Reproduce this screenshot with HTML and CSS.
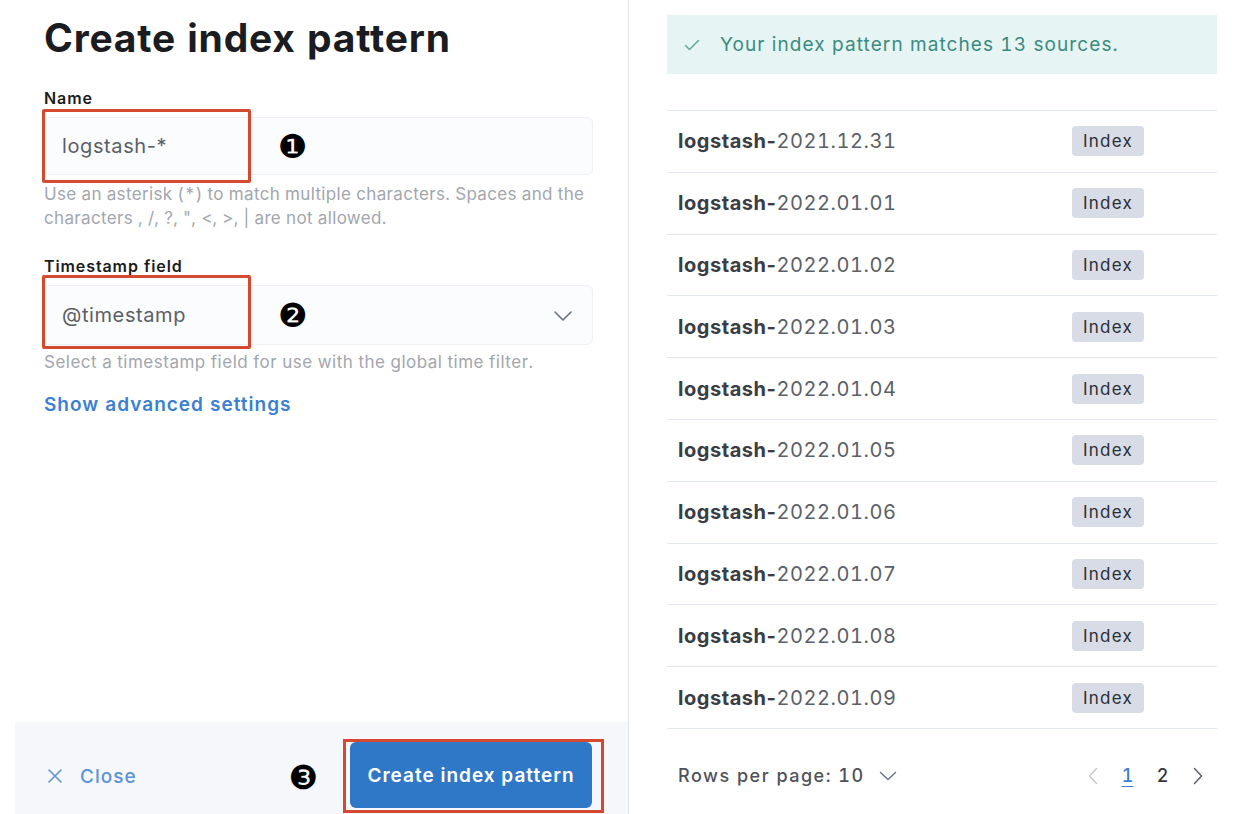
FILE: index.html
```html
<!DOCTYPE html>
<html>
<head>
<meta charset="utf-8">
<link rel="stylesheet" href="styles.css">
</head>
<body>
<div class="page">
  <section class="left">
    <div class="form">
      <h1 class="title">Create index pattern</h1>
      <div class="field">
        <div class="label">Name</div>
        <div class="control input">
          <span class="value">logstash-*</span>
          <span class="marker">❶</span>
          <span class="highlight"></span>
        </div>
        <p class="help">Use an asterisk (*) to match multiple characters. Spaces and the characters , /, ?, ", &lt;, &gt;, | are not allowed.</p>
      </div>
      <div class="field field-ts">
        <div class="label">Timestamp field</div>
        <div class="control select">
          <span class="value">@timestamp</span>
          <span class="marker">❷</span>
          <svg class="chev" width="20" height="12" viewBox="0 0 20 12"><path d="M2 2 L10 10 L18 2" fill="none" stroke="#69707d" stroke-width="1.6" stroke-linecap="round" stroke-linejoin="round"/></svg>
          <span class="highlight hl-ts"></span>
        </div>
        <p class="help help-ts">Select a timestamp field for use with the global time filter.</p>
      </div>
      <a class="advanced">Show advanced settings</a>
    </div>
    <footer class="footer">
      <div class="close">
        <svg width="16" height="16" viewBox="0 0 16 16"><path d="M2 2 L14 14 M14 2 L2 14" stroke="#5e92d8" stroke-width="1.6" stroke-linecap="round"/></svg>
        <span>Close</span>
      </div>
      <div class="actions">
        <span class="marker marker-3">❸</span>
        <div class="btn-wrap">
          <button class="btn">Create index pattern</button>
        </div>
      </div>
    </footer>
  </section>
  <section class="right">
    <div class="callout">
      <svg width="16" height="12" viewBox="0 0 16 12"><path d="M1.5 6.5 L5.5 10.5 L14.5 1.5" fill="none" stroke="#5fa89c" stroke-width="1.5" stroke-linecap="round" stroke-linejoin="round"/></svg>
      <span>Your index pattern matches 13 sources.</span>
    </div>
    <div class="table">
      <div class="row"><span class="name"><b>logstash-</b>2021.12.31</span><span class="badge">Index</span></div>
      <div class="row"><span class="name"><b>logstash-</b>2022.01.01</span><span class="badge">Index</span></div>
      <div class="row"><span class="name"><b>logstash-</b>2022.01.02</span><span class="badge">Index</span></div>
      <div class="row"><span class="name"><b>logstash-</b>2022.01.03</span><span class="badge">Index</span></div>
      <div class="row"><span class="name"><b>logstash-</b>2022.01.04</span><span class="badge">Index</span></div>
      <div class="row"><span class="name"><b>logstash-</b>2022.01.05</span><span class="badge">Index</span></div>
      <div class="row"><span class="name"><b>logstash-</b>2022.01.06</span><span class="badge">Index</span></div>
      <div class="row"><span class="name"><b>logstash-</b>2022.01.07</span><span class="badge">Index</span></div>
      <div class="row"><span class="name"><b>logstash-</b>2022.01.08</span><span class="badge">Index</span></div>
      <div class="row"><span class="name"><b>logstash-</b>2022.01.09</span><span class="badge">Index</span></div>
    </div>
    <div class="pager">
      <div class="rows-per">
        <span>Rows per page: 10</span>
        <svg width="18" height="10" viewBox="0 0 18 10"><path d="M1.5 1.5 L9 8.5 L16.5 1.5" fill="none" stroke="#69707d" stroke-width="1.4" stroke-linecap="round" stroke-linejoin="round"/></svg>
      </div>
      <div class="pages">
        <span class="pg"><svg width="10" height="18" viewBox="0 0 10 18"><path d="M8.5 1.5 L1.5 9 L8.5 16.5" fill="none" stroke="#c2c6cf" stroke-width="1.4" stroke-linecap="round" stroke-linejoin="round"/></svg></span>
        <span class="pg current">1</span>
        <span class="pg">2</span>
        <span class="pg"><svg width="10" height="18" viewBox="0 0 10 18"><path d="M1.5 1.5 L8.5 9 L1.5 16.5" fill="none" stroke="#545a66" stroke-width="1.4" stroke-linecap="round" stroke-linejoin="round"/></svg></span>
      </div>
    </div>
  </section>
</div>
</body>
</html>
```

FILE: styles.css
```css
* { box-sizing: border-box; }
html, body { margin: 0; padding: 0; background: #fff; }
body {
  font-family: Inter, "Noto Sans", "Liberation Sans", sans-serif;
  font-feature-settings: "tnum" 1;
  color: #1a1c21;
  width: 1236px;
  height: 814px;
  overflow: hidden;
}
.page {
  display: flex;
  height: 814px;
}
.left {
  width: 629px;
  border-right: 1px solid #e3e6ec;
  display: flex;
  flex-direction: column;
}
.form {
  flex: 1;
  padding: 15px 35px 0 44px;
}
.title {
  margin: 0;
  font-size: 39px;
  line-height: 46px;
  font-weight: 700;
  letter-spacing: 0.8px;
  color: #1a1c21;
}
.field { margin-top: 28px; }
.field-ts { margin-top: 27px; }
.label {
  font-size: 16px;
  line-height: 18px;
  font-weight: 600;
  letter-spacing: 0.9px;
  color: #1a1c21;
  margin-bottom: 10px;
}
.control {
  position: relative;
  height: 58px;
  background: #fbfcfd;
  border: 1px solid #eef0f4;
  border-radius: 6px;
  display: flex;
  align-items: center;
  padding-left: 17px;
}
.select { height: 60px; }
.value {
  font-size: 20px;
  letter-spacing: 0.6px;
  font-feature-settings: normal;
  color: #5a5e66;
}
.marker {
  position: absolute;
  left: 233px;
  top: 50%;
  transform: translateY(-50%);
  font-family: "DejaVu Serif", "DejaVu Sans", serif;
  font-size: 33px;
  line-height: 1;
  color: #000;
}
.chev {
  position: absolute;
  right: 19px;
  top: 24px;
}
.highlight {
  position: absolute;
  left: -3px;
  top: -9px;
  width: 209px;
  height: 74px;
  border: 3px solid #d4492f;
  border-radius: 2px;
}
.hl-ts { top: -11px; }
.help {
  margin: 7px 0 0;
  font-size: 17px;
  line-height: 24px;
  letter-spacing: 0.35px;
  color: #a2a6ad;
}
.help-ts { margin-top: 5px; letter-spacing: 0.5px; }
.advanced {
  display: block;
  margin-top: 19px;
  font-size: 19px;
  line-height: 24px;
  font-weight: 600;
  letter-spacing: 1px;
  color: #3b7fd2;
}
.footer {
  margin-left: 15px;
  height: 92px;
  background: #f5f7fa;
  display: flex;
  align-items: center;
  justify-content: space-between;
  padding: 0 24px 0 32px;
}
.close {
  display: flex;
  align-items: center;
  gap: 17px;
  font-size: 19px;
  font-weight: 500;
  letter-spacing: 1px;
  color: #5e92d8;
  margin-top: 16px;
}
.actions {
  display: flex;
  align-items: center;
}
.marker-3 {
  position: static;
  transform: none;
  margin-right: 25px;
  margin-top: 18px;
}
.btn-wrap {
  border: 3px solid #d4492f;
  padding: 0 9px 3px 4px;
  margin-top: 16px;
  height: 74px;
}
.btn {
  width: 242px;
  height: 66px;
  margin-top: 0;
  border: none;
  border-radius: 6px;
  background: #2f78c8;
  color: #fff;
  font-family: inherit;
  font-size: 19px;
  font-weight: 600;
  letter-spacing: 1px;
}
.right {
  flex: 1;
  padding: 15px 19px 0 38px;
  display: flex;
  flex-direction: column;
}
.callout {
  height: 59px;
  background: #e6f5f3;
  display: flex;
  align-items: center;
  gap: 20px;
  padding-left: 17px;
  font-size: 19px;
  letter-spacing: 1.1px;
  color: #3a8b80;
}
.table {
  margin-top: 36px;
  border-top: 1px solid #e3e7ef;
}
.row {
  height: 61.8px;
  border-bottom: 1px solid #e3e7ef;
  display: flex;
  align-items: center;
  padding-left: 11px;
}
.name {
  width: 394px;
  font-size: 20px;
  letter-spacing: 0.55px;
  color: #5b5f67;
}
.name b {
  font-weight: 700;
  font-feature-settings: normal;
  color: #3a3d44;
}
.badge {
  display: inline-block;
  width: 72px;
  height: 30px;
  line-height: 30px;
  text-align: center;
  background: #d7dce7;
  border-radius: 4px;
  font-size: 17px;
  letter-spacing: 1.2px;
  color: #2b2e35;
}
.pager {
  flex: 1;
  display: flex;
  align-items: center;
  justify-content: space-between;
  padding: 0 2px 0 11px;
  margin-top: 9px;
}
.rows-per {
  display: flex;
  align-items: center;
  gap: 14px;
  font-size: 18px;
  font-weight: 500;
  letter-spacing: 1.5px;
  color: #4e525a;
}
.pages {
  display: flex;
  align-items: center;
}
.pg {
  display: flex;
  justify-content: center;
  align-items: center;
  font-size: 18px;
  font-weight: 500;
  color: #343741;
  width: 35px;
}
.current {
  color: #3b7fd2;
  text-decoration: underline;
  text-underline-offset: 4px;
}
```
